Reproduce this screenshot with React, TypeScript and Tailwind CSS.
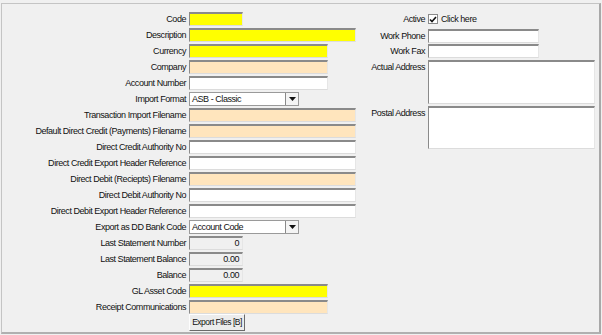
import type { ReactNode } from "react";

const yellow = "bg-[#ffff00]";
const peach = "bg-[#ffe5bd]";
const white = "bg-white";

const sunken =
  "border-t-2 border-l border-r border-b border-t-[#8a8a8a] border-l-[#8a8a8a] border-r-[#e6e6e6] border-b-[#dcdcdc]";

function Field({ w, bg, h = "h-[14px]", value }: { w: string; bg: string; h?: string; value?: string }) {
  return (
    <div className={`${w} ${h} ${bg} ${sunken} flex items-center justify-end pr-[3px] leading-none`}>
      {value}
    </div>
  );
}

function Combo({ value }: { value: string }) {
  return (
    <div className="flex h-[14px] w-[110px] items-center border border-[#9a9a9a] bg-white">
      <span className="flex-1 pl-[2px] leading-none">{value}</span>
      <div className="flex h-full w-[13px] items-center justify-center border-l border-[#8a8a8a] bg-[#f4f4f4]">
        <svg width="7" height="4" viewBox="0 0 7 4">
          <path d="M0 0h7L3.5 4z" fill="#111" />
        </svg>
      </div>
    </div>
  );
}

function Row({ label, children }: { label: string; children: ReactNode }) {
  return (
    <div className="flex h-[14px] items-center gap-[3px]">
      <span className="w-[184px] text-right leading-none">{label}</span>
      {children}
    </div>
  );
}

function SideRow({ label, children, top }: { label: string; children: ReactNode; top?: boolean }) {
  return (
    <div className={`flex gap-[3px] ${top ? "items-start" : "items-center"}`}>
      <span className={`w-[58px] text-right leading-none ${top ? "pt-[3px]" : ""}`}>{label}</span>
      {children}
    </div>
  );
}

export default function App() {
  return (
    <div className="h-[335px] w-[602px] overflow-hidden bg-[#f0f0f0] pt-[3px] pl-px font-['Liberation_Sans',Arial,sans-serif] text-[9px] tracking-[-0.45px] text-[#111]">
      <div className="flex h-[331px] w-[600px] border-t border-l border-r-2 border-b-2 border-t-[#c4c4c4] border-l-[#c4c4c4] border-r-[#a8a8a8] border-b-[#b0b0b0]">
        <div className="flex w-[354px] flex-col gap-[2px] pt-[8px]">
          <Row label="Code"><Field w="w-[54px]" bg={yellow} /></Row>
          <Row label="Description"><Field w="w-[167px]" bg={yellow} /></Row>
          <Row label="Currency"><Field w="w-[139px]" bg={yellow} /></Row>
          <Row label="Company"><Field w="w-[139px]" bg={peach} /></Row>
          <Row label="Account Number"><Field w="w-[139px]" bg={white} /></Row>
          <Row label="Import Format"><Combo value="ASB - Classic" /></Row>
          <Row label="Transaction Import Filename"><Field w="w-[167px]" bg={peach} /></Row>
          <Row label="Default Direct Credit (Payments) Filename"><Field w="w-[167px]" bg={peach} /></Row>
          <Row label="Direct Credit Authority No"><Field w="w-[167px]" bg={white} /></Row>
          <Row label="Direct Credit Export Header Reference"><Field w="w-[167px]" bg={white} /></Row>
          <Row label="Direct Debit (Reciepts) Filename"><Field w="w-[167px]" bg={peach} /></Row>
          <Row label="Direct Debit Authority No"><Field w="w-[167px]" bg={white} /></Row>
          <Row label="Direct Debit Export Header Reference"><Field w="w-[167px]" bg={white} /></Row>
          <Row label="Export as DD Bank Code"><Combo value="Account Code" /></Row>
          <Row label="Last Statement Number"><Field w="w-[54px]" bg="bg-[#f0f0f0]" value="0" /></Row>
          <Row label="Last Statement Balance"><Field w="w-[54px]" bg="bg-[#f0f0f0]" value="0.00" /></Row>
          <Row label="Balance"><Field w="w-[54px]" bg="bg-[#f0f0f0]" value="0.00" /></Row>
          <Row label="GL Asset Code"><Field w="w-[139px]" bg={yellow} /></Row>
          <Row label="Receipt Communications"><Field w="w-[139px]" bg={peach} /></Row>
          <div className="-mt-[2px] pl-[187px]">
            <button className="flex h-[17px] w-[56px] items-center justify-center border border-t-[#fdfdfd] border-l-[#fdfdfd] border-r-[#6a6a6a] border-b-[#6a6a6a] bg-[#ececec] px-0 text-[8.5px] leading-none tracking-[-0.5px] whitespace-nowrap">
              Export Files [B]
            </button>
          </div>
        </div>

        <div className="ml-[11px] flex w-[228px] flex-col pt-[8px]">
          <SideRow label="Active">
            <div className="flex h-[14px] items-center gap-[3px]">
              <div className="flex h-[10px] w-[10px] items-center justify-center border border-[#8a8a8a] bg-white">
                <svg width="8" height="7" viewBox="0 0 8 7">
                  <path d="M1 3.5l2 2L7 1" stroke="#111" strokeWidth="1.6" fill="none" />
                </svg>
              </div>
              <span className="leading-none">Click here</span>
            </div>
          </SideRow>
          <div className="mt-[3px] flex flex-col gap-px">
            <SideRow label="Work Phone"><Field w="w-[111px]" bg={white} /></SideRow>
            <SideRow label="Work Fax"><Field w="w-[111px]" bg={white} /></SideRow>
          </div>
          <div className="mt-[2px] flex flex-col gap-[2px]">
            <SideRow label="Actual Address" top><Field w="w-[167px]" h="h-[44px]" bg={white} /></SideRow>
            <SideRow label="Postal Address" top><Field w="w-[167px]" h="h-[43px]" bg={white} /></SideRow>
          </div>
        </div>
      </div>
    </div>
  );
}
